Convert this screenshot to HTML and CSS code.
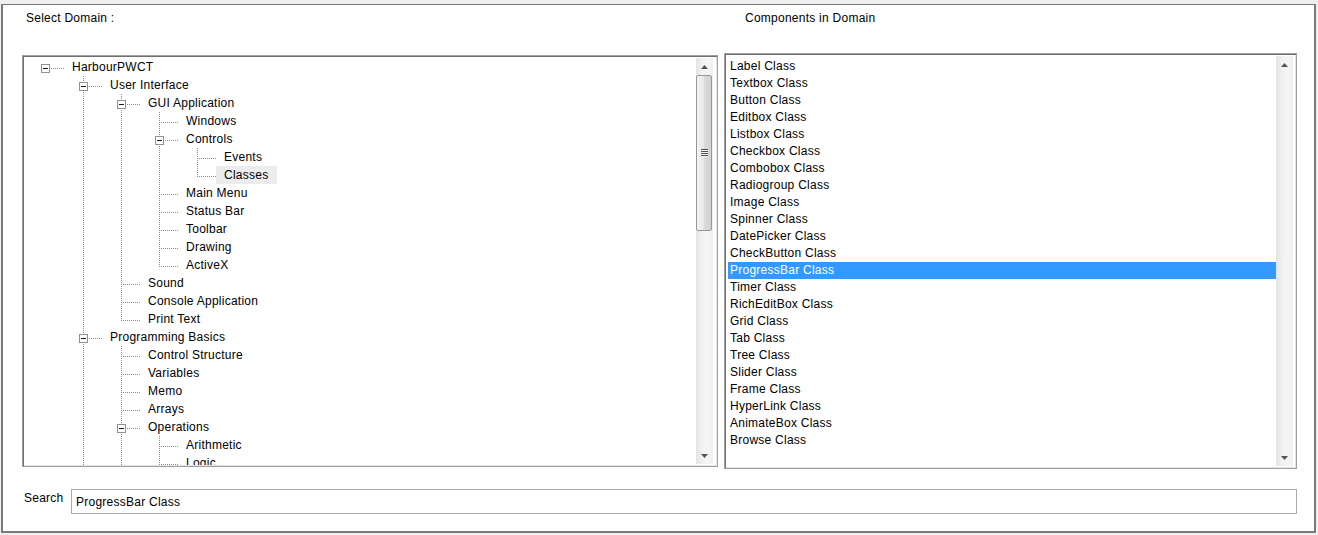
FILE: index.html
```html
<!DOCTYPE html>
<html>
<head>
<meta charset="utf-8">
<title>Select Domain</title>
<link rel="stylesheet" href="styles.css">
</head>
<body>
<div class="frame">
  <div class="grid">
    <div class="cap cap-left">Select Domain :</div>
    <div class="cap cap-right">Components in Domain</div>

    <div class="box tree-box">
      <div class="tree">
        <div class="row"><span class="c root"><i class="exp"></i></span><span class="t">HarbourPWCT</span></div>
        <div class="row"><span class="g"></span><span class="c next"><i class="exp"></i></span><span class="t">User Interface</span></div>
        <div class="row"><span class="g"></span><span class="g on"></span><span class="c next"><i class="exp"></i></span><span class="t">GUI Application</span></div>
        <div class="row"><span class="g"></span><span class="g on"></span><span class="g on"></span><span class="c next"></span><span class="t">Windows</span></div>
        <div class="row"><span class="g"></span><span class="g on"></span><span class="g on"></span><span class="c next"><i class="exp"></i></span><span class="t">Controls</span></div>
        <div class="row"><span class="g"></span><span class="g on"></span><span class="g on"></span><span class="g on"></span><span class="c next"></span><span class="t">Events</span></div>
        <div class="row"><span class="g"></span><span class="g on"></span><span class="g on"></span><span class="g on"></span><span class="c last"></span><span class="t sel">Classes</span></div>
        <div class="row"><span class="g"></span><span class="g on"></span><span class="g on"></span><span class="c next"></span><span class="t">Main Menu</span></div>
        <div class="row"><span class="g"></span><span class="g on"></span><span class="g on"></span><span class="c next"></span><span class="t">Status Bar</span></div>
        <div class="row"><span class="g"></span><span class="g on"></span><span class="g on"></span><span class="c next"></span><span class="t">Toolbar</span></div>
        <div class="row"><span class="g"></span><span class="g on"></span><span class="g on"></span><span class="c next"></span><span class="t">Drawing</span></div>
        <div class="row"><span class="g"></span><span class="g on"></span><span class="g on"></span><span class="c last"></span><span class="t">ActiveX</span></div>
        <div class="row"><span class="g"></span><span class="g on"></span><span class="c next"></span><span class="t">Sound</span></div>
        <div class="row"><span class="g"></span><span class="g on"></span><span class="c next"></span><span class="t">Console Application</span></div>
        <div class="row"><span class="g"></span><span class="g on"></span><span class="c last"></span><span class="t">Print Text</span></div>
        <div class="row"><span class="g"></span><span class="c next"><i class="exp"></i></span><span class="t">Programming Basics</span></div>
        <div class="row"><span class="g"></span><span class="g on"></span><span class="c next"></span><span class="t">Control Structure</span></div>
        <div class="row"><span class="g"></span><span class="g on"></span><span class="c next"></span><span class="t">Variables</span></div>
        <div class="row"><span class="g"></span><span class="g on"></span><span class="c next"></span><span class="t">Memo</span></div>
        <div class="row"><span class="g"></span><span class="g on"></span><span class="c next"></span><span class="t">Arrays</span></div>
        <div class="row"><span class="g"></span><span class="g on"></span><span class="c next"><i class="exp"></i></span><span class="t">Operations</span></div>
        <div class="row"><span class="g"></span><span class="g on"></span><span class="g on"></span><span class="c next"></span><span class="t">Arithmetic</span></div>
        <div class="row"><span class="g"></span><span class="g on"></span><span class="g on"></span><span class="c next"></span><span class="t">Logic</span></div>
      </div>
      <div class="sb tree-sb">
        <div class="btn"><svg width="7" height="4" viewBox="0 0 7 4"><polygon points="0,4 7,4 3.5,0" fill="#555"/></svg></div>
        <div class="thumb"><span class="grip"></span></div>
        <div class="track"></div>
        <div class="btn"><svg width="7" height="4" viewBox="0 0 7 4"><polygon points="0,0 7,0 3.5,4" fill="#555"/></svg></div>
      </div>
    </div>

    <div class="box list-box">
      <ul class="list">
        <li>Label Class</li>
        <li>Textbox Class</li>
        <li>Button Class</li>
        <li>Editbox Class</li>
        <li>Listbox Class</li>
        <li>Checkbox Class</li>
        <li>Combobox Class</li>
        <li>Radiogroup Class</li>
        <li>Image Class</li>
        <li>Spinner Class</li>
        <li>DatePicker Class</li>
        <li>CheckButton Class</li>
        <li class="hl">ProgressBar Class</li>
        <li>Timer Class</li>
        <li>RichEditBox Class</li>
        <li>Grid Class</li>
        <li>Tab Class</li>
        <li>Tree Class</li>
        <li>Slider Class</li>
        <li>Frame Class</li>
        <li>HyperLink Class</li>
        <li>AnimateBox Class</li>
        <li>Browse Class</li>
      </ul>
      <div class="sb list-sb">
        <div class="btn"><svg width="7" height="4" viewBox="0 0 7 4"><polygon points="0,4 7,4 3.5,0" fill="#555"/></svg></div>
        <div class="track"></div>
        <div class="btn"><svg width="7" height="4" viewBox="0 0 7 4"><polygon points="0,0 7,0 3.5,4" fill="#555"/></svg></div>
      </div>
    </div>
  </div>

  <div class="search">
    <span class="search-label">Search</span>
    <div class="input">ProgressBar Class</div>
  </div>
</div>
</body>
</html>
```
FILE: styles.css
```css
html, body {
  margin: 0;
  padding: 0;
  background: #f0f0f0;
}
body {
  font-family: "Liberation Sans", Arial, sans-serif;
  font-size: 12px;
  letter-spacing: 0.25px;
  color: #000;
}
.frame {
  box-sizing: border-box;
  margin: 4px 0 0 1px;
  width: 1315px;
  height: 529px;
  background: #fff;
  border: 2px solid #7a7a7a;
  border-top-width: 1px;
  padding: 6px 0 0 19px;
}
.grid {
  display: grid;
  grid-template-columns: 696px 573px;
  column-gap: 6px;
  row-gap: 28px;
  align-items: start;
}
.cap {
  line-height: 14px;
  white-space: nowrap;
}
.cap-left { padding-left: 4px; }
.cap-right { padding-left: 21px; }

.box {
  box-sizing: border-box;
  border: 1px solid #a0a0a0;
  padding: 1px;
  box-shadow: inset 1px 1px 0 #6f6f6f, inset -1px -1px 0 #e3e3e3;
  display: flex;
  background: #fff;
}
.tree-box {
  margin-top: 2px;
  height: 412px;
}
.list-box {
  height: 416px;
}

/* tree */
.tree {
  flex: 1;
  min-width: 0;
  overflow: hidden;
  padding-top: 1px;
}
.row {
  display: flex;
  height: 18px;
  align-items: stretch;
}
.g {
  flex: none;
  width: 38px;
  height: 18px;
}
.g.on {
  background: repeating-linear-gradient(to bottom, #8c8c8c 0 1px, transparent 1px 2px) 21px 0 / 1px 18px no-repeat;
}
.c {
  flex: none;
  width: 40px;
  height: 18px;
  display: flex;
  align-items: flex-start;
}
.c.root {
  background: repeating-linear-gradient(to right, #8c8c8c 0 1px, transparent 1px 2px) 21px 10px / 19px 1px no-repeat;
}
.c.next {
  background:
    repeating-linear-gradient(to right, #8c8c8c 0 1px, transparent 1px 2px) 21px 10px / 19px 1px no-repeat,
    repeating-linear-gradient(to bottom, #8c8c8c 0 1px, transparent 1px 2px) 21px 0 / 1px 18px no-repeat;
}
.c.last {
  background:
    repeating-linear-gradient(to right, #8c8c8c 0 1px, transparent 1px 2px) 21px 10px / 19px 1px no-repeat,
    repeating-linear-gradient(to bottom, #8c8c8c 0 1px, transparent 1px 2px) 21px 0 / 1px 11px no-repeat;
}
.exp {
  box-sizing: border-box;
  width: 9px;
  height: 9px;
  margin: 6px 0 0 17px;
  border: 1px solid #919191;
  background: #fff;
  display: flex;
  align-items: center;
  justify-content: center;
}
.exp::before {
  content: "";
  width: 5px;
  height: 1px;
  background: #1a1a1a;
}
.t {
  padding: 0 9px 0 8px;
  line-height: 18px;
  white-space: nowrap;
}
.t.sel {
  background: #ececec;
}

/* scrollbars */
.sb {
  flex: none;
  width: 17px;
  display: flex;
  flex-direction: column;
  background: linear-gradient(to right, #e4e4e4 0, #f1f1f1 35%, #f5f5f5 70%, #efefef 100%);
}
.tree-sb { margin: 1px 3px 1px 0; }
.list-sb { margin: 1px 2px 1px 0; }
.btn {
  flex: none;
  height: 17px;
  display: flex;
  align-items: center;
  justify-content: center;
}
.btn svg { display: block; }
.thumb {
  flex: none;
  box-sizing: border-box;
  height: 156px;
  margin-right: 1px;
  border: 1px solid #979797;
  border-radius: 2px;
  background: linear-gradient(to right, #f3f3f3 0, #e9e9e9 45%, #dadada 55%, #d2d2d2 100%);
  display: flex;
  align-items: center;
  justify-content: center;
}
.grip {
  width: 7px;
  height: 8px;
  background: repeating-linear-gradient(to bottom, #4f4f4f 0 1px, #f6f6f6 1px 2px);
}
.track {
  flex: 1;
}

/* list */
.list {
  flex: 1;
  min-width: 0;
  margin: 0;
  padding: 3px 0 0 2px;
  list-style: none;
  overflow: hidden;
}
.list li {
  height: 17px;
  line-height: 17px;
  padding-left: 2px;
  white-space: nowrap;
}
.list li.hl {
  background: #3399ff;
  color: #fff;
}

/* search */
.search {
  display: flex;
  align-items: flex-start;
  margin-top: 20px;
  padding-left: 2px;
}
.search-label {
  flex: none;
  width: 47px;
  margin-top: 2px;
  line-height: 14px;
}
.input {
  box-sizing: border-box;
  width: 1226px;
  height: 25px;
  border: 1px solid #ababab;
  padding-left: 4px;
  display: flex;
  align-items: center;
  line-height: 14px;
}
```
